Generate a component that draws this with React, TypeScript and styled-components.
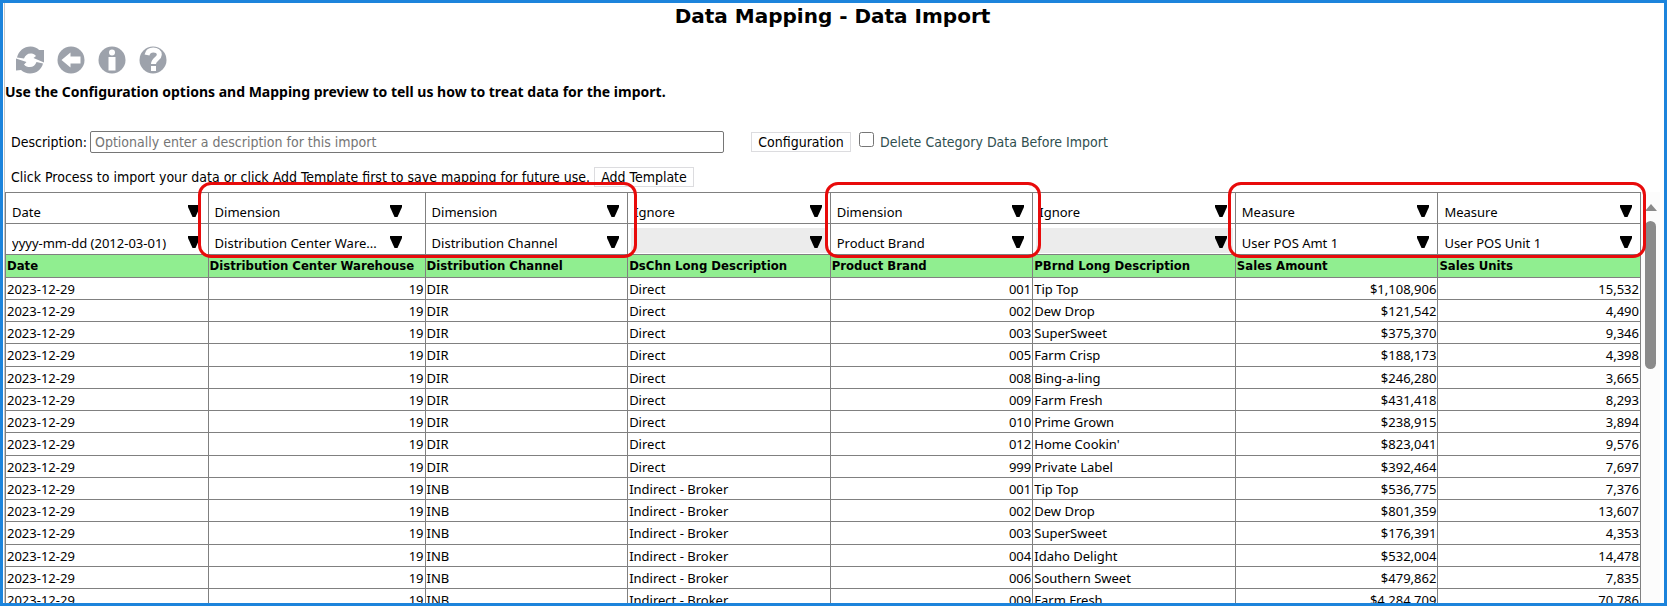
import React from "react";
import styled, { createGlobalStyle, css } from "styled-components";

const Global = createGlobalStyle`
  *, *::before, *::after { box-sizing: border-box; }
  body { margin: 0; background: #fff; color: #000; font: 14px/16px "DejaVu Sans Condensed", Verdana, sans-serif; }
`;

const tableText = css`
  font-family: "Noto Sans", Tahoma, sans-serif;
  font-size: 13px;
`;

const Frame = styled.main`
  display: flex;
  flex-direction: column;
  height: 100vh;
  overflow: hidden;
  border: 3px solid #1c84dc;
  padding-right: 4px;
`;

const Inner = styled.div`
  flex: 1;
  display: flex;
  flex-direction: column;
  margin-left: 1px;
  border-left: 1px solid #c8c8c8;
`;

const Title = styled.h1`
  margin: 0;
  text-align: center;
  font-family: "DejaVu Sans", Verdana, sans-serif;
  font-size: 20px;
  line-height: 26px;
`;

const Toolbar = styled.div`
  display: flex;
  gap: 13px;
  margin-top: 17px;
  padding-left: 11px;
`;

const IconButton = styled.button`
  width: 28px;
  height: 28px;
  padding: 0;
  border: 0;
  background: none;
  svg { display: block; }
`;

const Intro = styled.p`
  margin: 10px 0 0;
  font-family: "Noto Sans", Verdana, sans-serif;
  font-weight: bold;
`;

const Line = styled.div`
  display: flex;
  align-items: center;
  padding-left: 6px;
`;

const FormLine = styled(Line)`
  margin-top: 31px;
  height: 22px;
`;

const TemplateLine = styled(Line)`
  margin-top: 14px;
  height: 20px;
  gap: 4px;
`;

const TextInput = styled.input`
  width: 634px;
  height: 22px;
  margin-left: 3px;
  padding: 0 4px;
  border: 1px solid #767676;
  border-radius: 2px;
  font: inherit;
  &::placeholder { color: #757575; opacity: 1; }
`;

const PlainButton = styled.button`
  height: 20px;
  width: 100px;
  padding: 0;
  border: 1px solid #dcdcdf;
  background: #fff;
  color: #000;
  font: inherit;
  white-space: nowrap;
`;

const ConfigGroup = styled.div`
  display: flex;
  align-items: center;
  gap: 8px;
  margin-left: 27px;
`;

const CheckLabel = styled.label`
  display: flex;
  align-items: center;
  gap: 6px;
  color: #2f4f4f;
`;

const Check = styled.input`
  width: 15px;
  height: 15px;
  margin: 0 0 6px;
`;

const Preview = styled.section`
  display: flex;
  flex: 1;
  align-items: stretch;
  min-height: 0;
  margin-top: 5px;
`;

const TableArea = styled.div`
  flex: 1;
  min-width: 0;
`;

const Table = styled.table`
  width: 100%;
  table-layout: fixed;
  border-collapse: collapse;
  ${tableText}
  line-height: 16px;
  th, td { border: 1px solid #808080; white-space: nowrap; }
`;

const WideCol = styled.col`
  width: 217px;
`;

const MapCell = styled.td`
  position: relative;
  height: 31px;
  padding: 4px 2px 1px 3px;
`;

const SelectBox = styled.div<{ $inset?: boolean }>`
  position: relative;
  margin-right: ${(p) => (p.$inset ? 15 : 0)}px;
`;

const Select = styled.select`
  display: block;
  width: 100%;
  height: 25px;
  padding: 5px 20px 0 3px;
  border: 0;
  border-radius: 0;
  appearance: none;
  background: #fff;
  color: #000;
  opacity: 1;
  ${tableText}
  &:disabled { background: #ececec; }
`;

const Arrow = styled.svg`
  position: absolute;
  top: 8px;
  right: 6px;
  pointer-events: none;
`;

const Highlight = styled.div<{ $left: number; $cells: number; $extra: number }>`
  position: absolute;
  z-index: 2;
  top: -11px;
  left: ${(p) => p.$left}px;
  width: calc(${(p) => p.$cells * 100}% + ${(p) => p.$extra}px);
  height: 76px;
  border: 3px solid #e80b0b;
  border-radius: 13px;
  pointer-events: none;
`;

const HeadCell = styled.th`
  height: 23px;
  padding: 0 1px;
  background: #90ee90;
  font-family: "DejaVu Sans Condensed", Tahoma, sans-serif;
  text-align: left;
`;

const DataRow = styled.tr`
  height: 22px;
  &:nth-child(4n) { height: 23px; }
`;

const Cell = styled.td<{ $right?: boolean }>`
  padding: 0 1px;
  text-align: ${(p) => (p.$right ? "right" : "left")};
`;

const ScrollTrack = styled.div`
  display: flex;
  flex-direction: column;
  align-items: center;
  width: 19px;
  padding-top: 12px;
  background: #fcfcfc;
`;

const Thumb = styled.div`
  width: 11px;
  height: 148px;
  margin-top: 9px;
  border-radius: 6px;
  background: #8a8a8a;
`;

type Mapping = {
  role: string;
  target: string;
  header: string;
  right?: boolean;
  highlight?: { left: number; cells: number; extra: number };
};

const columns: Mapping[] = [
  { role: "Date", target: "yyyy-mm-dd (2012-03-01)", header: "Date" },
  { role: "Dimension", target: "Distribution Center Ware...", header: "Distribution Center Warehouse", right: true, highlight: { left: -11, cells: 2, extra: 7 } },
  { role: "Dimension", target: "Distribution Channel", header: "Distribution Channel" },
  { role: "Ignore", target: "", header: "DsChn Long Description" },
  { role: "Dimension", target: "Product Brand", header: "Product Brand", right: true, highlight: { left: -6, cells: 1, extra: 15 } },
  { role: "Ignore", target: "", header: "PBrnd Long Description" },
  { role: "Measure", target: "User POS Amt 1", header: "Sales Amount", right: true, highlight: { left: -8, cells: 2, extra: 15 } },
  { role: "Measure", target: "User POS Unit 1", header: "Sales Units", right: true },
];

const channels: Record<string, string> = { DIR: "Direct", INB: "Indirect - Broker" };

const sales = [
  ["DIR", "001", "Tip Top", "$1,108,906", "15,532"],
  ["DIR", "002", "Dew Drop", "$121,542", "4,490"],
  ["DIR", "003", "SuperSweet", "$375,370", "9,346"],
  ["DIR", "005", "Farm Crisp", "$188,173", "4,398"],
  ["DIR", "008", "Bing-a-ling", "$246,280", "3,665"],
  ["DIR", "009", "Farm Fresh", "$431,418", "8,293"],
  ["DIR", "010", "Prime Grown", "$238,915", "3,894"],
  ["DIR", "012", "Home Cookin'", "$823,041", "9,576"],
  ["DIR", "999", "Private Label", "$392,464", "7,697"],
  ["INB", "001", "Tip Top", "$536,775", "7,376"],
  ["INB", "002", "Dew Drop", "$801,359", "13,607"],
  ["INB", "003", "SuperSweet", "$176,391", "4,353"],
  ["INB", "004", "Idaho Delight", "$532,004", "14,478"],
  ["INB", "006", "Southern Sweet", "$479,862", "7,835"],
  ["INB", "009", "Farm Fresh", "$4,284,709", "70,786"],
];

const grey = "#9da2ab";

const RefreshIcon = () => (
  <svg width="28" height="28" viewBox="0 0 28 28" fill={grey}>
    <path d="M1 11.500C2.500 5 8 .5 14.500 .5c3.500 0 6.500 1.500 8.700 3.500L28 4v12.500L17.500 12l2.500-2C18.500 8 16.500 7.500 14.500 7.500c-3 0-5.500 2-6.500 5z" />
    <path d="M27 17.500C25.500 23.500 20.500 27.500 14 27.500c-3.600 0-6.600-1.500-9-3.500L0 24.500V12.500L10.500 16 8 18.500c1.500 2 3.500 2.500 6 2.500 3 0 5.500-2 6.500-5z" />
  </svg>
);
const BackIcon = () => (
  <svg width="28" height="28" viewBox="0 0 28 28">
    <circle cx="14" cy="14" r="13.500" fill={grey} />
    <path d="M4.500 14 13.500 6.500v4H23.500v7H13.500v4z" fill="#fff" />
  </svg>
);
const InfoIcon = () => (
  <svg width="28" height="28" viewBox="0 0 28 28">
    <circle cx="14" cy="14" r="13.500" fill={grey} />
    <circle cx="14" cy="6.500" r="3" fill="#fff" />
    <path d="M10.500 11h7v13.500h-7z" fill="#fff" />
  </svg>
);
const HelpIcon = () => (
  <svg width="28" height="28" viewBox="0 0 28 28">
    <circle cx="14" cy="14" r="13.500" fill={grey} />
    <path d="M8 9c.7-3.300 3-5 6.300-5 3.500 0 6 1.700 6 4.700 0 4.100-5.800 4.300-5.800 9.300" fill="none" stroke="#fff" strokeWidth="5" />
    <path d="M12 20h5v5h-5z" fill="#fff" />
  </svg>
);

const MappingSelect = ({ label, value, inset }: { label: string; value: string; inset?: boolean }) => (
  <SelectBox $inset={inset}>
    <Select aria-label={label} disabled={value === ""} defaultValue={value}>
      <option value={value}>{value}</option>
    </Select>
    <Arrow width="12" height="12" viewBox="0 0 12 12"><path d="M0 0h12v2L7.500 12h-3L0 2z" /></Arrow>
  </SelectBox>
);

export default function App() {
  return (
    <>
      <Global />
      <Frame>
        <Inner>
          <Title>Data Mapping - Data Import</Title>
          <Toolbar>
            <IconButton aria-label="Refresh"><RefreshIcon /></IconButton>
            <IconButton aria-label="Back"><BackIcon /></IconButton>
            <IconButton aria-label="Information"><InfoIcon /></IconButton>
            <IconButton aria-label="Help"><HelpIcon /></IconButton>
          </Toolbar>
          <Intro>Use the Configuration options and Mapping preview to tell us how to treat data for the import.</Intro>
          <FormLine>
            <label htmlFor="description">Description:</label>
            <TextInput id="description" placeholder="Optionally enter a description for this import" />
            <ConfigGroup>
              <PlainButton>Configuration</PlainButton>
              <CheckLabel>
                <Check type="checkbox" />
                Delete Category Data Before Import
              </CheckLabel>
            </ConfigGroup>
          </FormLine>
          <TemplateLine>
            <span>Click Process to import your data or click Add Template first to save mapping for future use.</span>
            <PlainButton>Add Template</PlainButton>
          </TemplateLine>
          <Preview>
            <TableArea>
              <Table>
                <colgroup>
                  <col />
                  <WideCol />
                  <col span={6} />
                </colgroup>
                <thead>
                  <tr>
                    {columns.map((c, i) => (
                      <MapCell key={i}>
                        <MappingSelect label={`${c.header} role`} value={c.role} inset={i === 1} />
                        {c.highlight && (
                          <Highlight $left={c.highlight.left} $cells={c.highlight.cells} $extra={c.highlight.extra} />
                        )}
                      </MapCell>
                    ))}
                  </tr>
                  <tr>
                    {columns.map((c, i) => (
                      <MapCell key={i}>
                        <MappingSelect label={`${c.header} target`} value={c.target} inset={i === 1} />
                      </MapCell>
                    ))}
                  </tr>
                  <tr>
                    {columns.map((c) => (
                      <HeadCell key={c.header} scope="col">{c.header}</HeadCell>
                    ))}
                  </tr>
                </thead>
                <tbody>
                  {sales.map(([channel, brand, name, amount, units], r) => (
                    <DataRow key={r}>
                      {["2023-12-29", "19", channel, channels[channel], brand, name, amount, units].map((v, i) => (
                        <Cell key={i} $right={columns[i].right}>{v}</Cell>
                      ))}
                    </DataRow>
                  ))}
                </tbody>
              </Table>
            </TableArea>
            <ScrollTrack>
              <svg width="12" height="8" viewBox="0 0 12 8"><path d="M6 0l6 7H0z" fill="#8a8a8a" /></svg>
              <Thumb />
            </ScrollTrack>
          </Preview>
        </Inner>
      </Frame>
    </>
  );
}
